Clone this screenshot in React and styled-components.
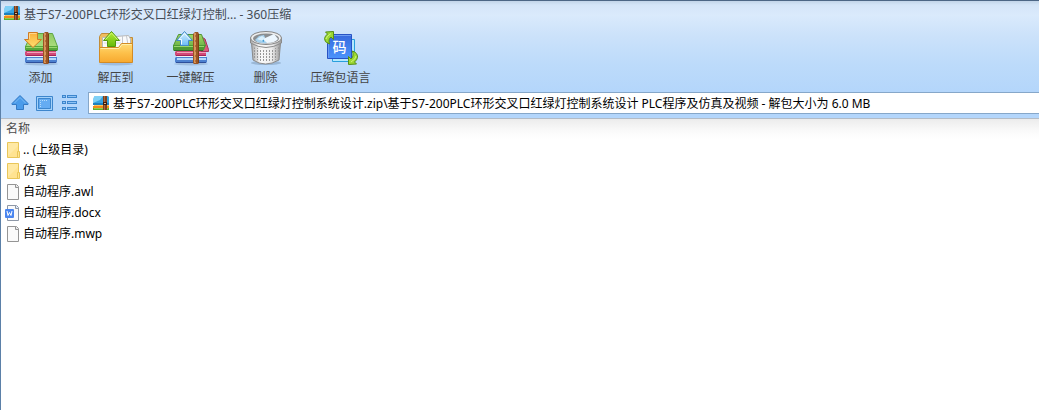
import { useState } from "react";
import styled, { createGlobalStyle } from "styled-components";

const GlobalStyle = createGlobalStyle`
	* {
		box-sizing: border-box;
	}
	body {
		margin: 0;
		background-color: white;
		font-family: "Noto Sans", "Noto Sans CJK SC", sans-serif;
		font-size: 12px;
	}
	button,
	input {
		font: inherit;
	}
`;

const Window = styled.div`
	min-height: 100vh;
	border-top: 1px solid #4c6685;
	border-left: 1px solid #5b80a8;
	background-color: white;
`;

const Header = styled.header`
	padding-bottom: 4px;
	border-bottom: 1px solid #b4bcc6;
	background: linear-gradient(
		#c2d4e8 0px,
		#d4e5f8 4px,
		#daeafc 14px,
		#cce2fa 34px,
		#bddbfa 62px,
		#b4d6fb 90px,
		#b4d6fb 100%
	);
`;

const TitleBar = styled.div`
	display: flex;
	align-items: center;
	gap: 3px;
	height: 25px;
	padding-left: 3px;
`;

const Title = styled.h1`
	margin: 0;
	font-size: 12px;
	font-weight: 400;
	color: #454b54;
`;

const Toolbar = styled.div`
	display: flex;
	height: 66px;
	padding-left: 2px;
`;

const ToolButton = styled.button`
	display: flex;
	flex-direction: column;
	align-items: center;
	gap: 2px;
	width: 75px;
	padding: 3px 0 0;
	border: none;
	background: none;
	color: #444;
	line-height: 18px;
	white-space: nowrap;
	cursor: pointer;
`;

const AddressRow = styled.div`
	display: flex;
	align-items: center;
	height: 22px;
	padding-left: 6px;
`;

const NavButton = styled.button`
	display: flex;
	align-items: center;
	justify-content: center;
	width: 25px;
	height: 22px;
	padding: 0;
	border: none;
	background: none;
	cursor: pointer;
`;

const AddressBox = styled.label`
	display: flex;
	align-items: center;
	flex: 1;
	gap: 3px;
	height: 22px;
	margin-left: 6px;
	padding-left: 4px;
	border: 1px solid #86a7c9;
	border-right: none;
	background-color: white;
`;

const AddressInput = styled.input`
	flex: 1;
	min-width: 0;
	height: 20px;
	padding: 0;
	border: none;
	outline: none;
	background: none;
	color: black;
`;

const FileTable = styled.table`
	width: 100%;
	border-collapse: collapse;
	background: linear-gradient(#ececec 0px, #fafafa 12px, white 20px);
`;

const HeadCell = styled.th`
	height: 20px;
	padding: 0 0 0 5px;
	font-weight: 400;
	line-height: 18px;
	text-align: left;
	color: #4c4c4c;
`;

const FileCell = styled.td`
	height: 21px;
	padding: 0 0 0 4px;
	color: black;
`;

const FileName = styled.div`
	display: flex;
	align-items: center;
	gap: 2px;
	line-height: 18px;
`;

const ZipIcon = () => (
	<svg width="17" height="15" viewBox="0 0 17 15" aria-hidden="true">
		<path d="M1 1L2 0H15L16 1V8L15 9H1L0 8Z" fill="#36a5e4" />
		<path d="M1 1L2 0H10L7 4L0 7V3Z" fill="#7fd0f6" />
		<path d="M0 7H16V9H0Z" fill="#1f7fbc" />
		<path d="M1 9H16V10H1Z" fill="#ffc65a" />
		<path d="M0 10H16V12H0Z" fill="#f08a1c" />
		<path d="M0 12H16V14H0Z" fill="#5fae2a" />
		<path d="M1 12H15V13H1Z" fill="#93d04c" />
		<path d="M10 0H14V14H10Z" fill="#7d411f" />
		<path d="M11.5 0V14" stroke="#a9693d" />
		<path d="M10 6H14V9H10Z" fill="#3f1c0d" />
		<path d="M11 7H13V8H11Z" fill="#e0b080" />
	</svg>
);

const Books = () => (
	<>
		<path d="M4 22H34V27H4L3 26V23Z" fill="#d24a78" />
		<path d="M5 23.5H34" stroke="#f3a0ba" />
		<path d="M4 26.5H34" stroke="#a52456" />
		<path d="M5 27.5H34" stroke="#f0f2f6" />
		<path d="M4 28H35V33L34 34H4L3 33V29Z" fill="#4c80cf" />
		<path d="M5 30H34" stroke="#b4d8fa" strokeWidth="2" />
		<path d="M4 33.5H34" stroke="#2d4f9b" />
	</>
);

const Strap = () => (
	<>
		<path d="M21 5L23 3H26L27 5V34L26 35H22L21 34Z" fill="#9a5524" />
		<path d="M23 4V34" stroke="#d6955a" strokeWidth="2" />
		<path d="M23.5 6V33" stroke="#b4703a" strokeDasharray="2 3" />
		<path d="M26.5 5V34" stroke="#7a3e14" />
	</>
);

const AddIcon = () => (
	<svg width="38" height="38" viewBox="0 0 38 38" aria-hidden="true">
		<defs>
			<linearGradient id="addCover" x1="0" y1="0" x2="0" y2="1">
				<stop offset="0" stopColor="#8fcb62" />
				<stop offset="1" stopColor="#a9dc7c" />
			</linearGradient>
			<linearGradient id="addArrow" x1="0" y1="0" x2="0" y2="1">
				<stop offset="0" stopColor="#fbb03c" />
				<stop offset="1" stopColor="#ffe070" />
			</linearGradient>
		</defs>
		<ellipse cx="19" cy="35" rx="17" ry="1.5" fill="#6687ab" opacity=".35" />
		<Books />
		<path d="M9.5 4.5H30.5L35.5 17.5H3.5Z" fill="url(#addCover)" stroke="#5fa544" />
		<path d="M3 17H36V21L35 22H4L3 21Z" fill="#58a83a" />
		<path d="M4 18.5H35" stroke="#9ad66c" />
		<path d="M4 21.5H35" stroke="#35782a" />
		<Strap />
		<path d="M6.5 3.5H15.5V10.5H19.5L11 18.5L2.5 10.5H6.5Z" fill="url(#addArrow)" stroke="#d07c24" />
		<path d="M7.5 10V4.5H14.5" fill="none" stroke="#ffd68c" />
	</svg>
);

const ExtractToIcon = () => (
	<svg width="38" height="38" viewBox="0 0 38 38" aria-hidden="true">
		<defs>
			<linearGradient id="folderFront" x1="0" y1="0" x2="0" y2="1">
				<stop offset="0" stopColor="#ffdc78" />
				<stop offset=".5" stopColor="#fdc04a" />
				<stop offset="1" stopColor="#f7a92f" />
			</linearGradient>
			<linearGradient id="extractArrow" x1="0" y1="0" x2="0" y2="1">
				<stop offset="0" stopColor="#b6ee35" />
				<stop offset="1" stopColor="#65b90c" />
			</linearGradient>
		</defs>
		<ellipse cx="19" cy="35" rx="17" ry="1.5" fill="#6687ab" opacity=".35" />
		<path d="M2.5 32V7.5L4.5 4.5H12.5L15.5 8.5H35.5V32Z" fill="#efbd5c" stroke="#c08c3a" />
		<path d="M5.5 8.5L31.5 6.5L33.5 10V22H5.5Z" fill="#fafafa" stroke="#b9b9b9" />
		<path d="M25.5 7V16M29.5 7L31 16" stroke="#c3c7cf" />
		<path d="M7 11H24M7 14H24" stroke="#d8dbe0" />
		<path d="M2.5 18.5H21.5L24.5 14.5H35.5V33.5H2.5Z" fill="url(#folderFront)" stroke="#d38b24" />
		<path d="M3.5 19.5H22L25 15.5H34.5" fill="none" stroke="#fff0aa" />
		<path d="M10.5 17.5V11.5H6.5L14.5 2.5L22.5 11.5H18.5V17.5Z" fill="url(#extractArrow)" stroke="#52960f" />
		<path d="M8.5 10.5L14.5 4L20.5 10.5" fill="none" stroke="#d4f779" />
	</svg>
);

const OneClickIcon = () => (
	<svg width="38" height="38" viewBox="0 0 38 38" aria-hidden="true">
		<defs>
			<linearGradient id="oneCover" x1="0" y1="0" x2="0" y2="1">
				<stop offset="0" stopColor="#a3d763" />
				<stop offset="1" stopColor="#71b64a" />
			</linearGradient>
			<linearGradient id="oneArrow" x1="0" y1="0" x2="0" y2="1">
				<stop offset="0" stopColor="#d8f0ff" />
				<stop offset="1" stopColor="#6bbcf7" />
			</linearGradient>
		</defs>
		<ellipse cx="19" cy="35" rx="17" ry="1.5" fill="#6687ab" opacity=".35" />
		<Books />
		<path d="M30.5 8.5L33 10L36.5 20.5V22.5H29Z" fill="#dc5b7c" stroke="#a8305a" />
		<path d="M6.5 5.5H29.5L33.5 16.5H1.5Z" fill="url(#oneCover)" stroke="#4f9437" />
		<path d="M1 16H34L32 21L31 22H2L1 21Z" fill="#4e9a34" />
		<path d="M2 17.5H32" stroke="#9ad66c" />
		<path d="M2 21.5H31" stroke="#2f6c26" />
		<Strap />
		<path d="M8.5 16.5V11.5H4.5L12.5 2.5L20.5 11.5H16.5V16.5Z" fill="url(#oneArrow)" stroke="#4289c9" />
		<path d="M9.5 15.5V10.5H7L12.5 4.5L18 10.5" fill="none" stroke="#f2faff" />
	</svg>
);

const DeleteIcon = () => (
	<svg width="38" height="38" viewBox="0 0 38 38" aria-hidden="true">
		<defs>
			<linearGradient id="binBody">
				<stop offset="0" stopColor="#a8a8a8" />
				<stop offset=".3" stopColor="#fafafa" />
				<stop offset=".7" stopColor="#ededed" />
				<stop offset="1" stopColor="#9a9a9a" />
			</linearGradient>
			<pattern id="binHoles" width="3" height="3" patternUnits="userSpaceOnUse">
				<rect width="1" height="2" x="1" fill="#979797" />
			</pattern>
		</defs>
		<ellipse cx="19" cy="34" rx="15" ry="2" fill="#587592" opacity=".35" />
		<path d="M4.5 14L6 31Q18 39 32 31L33.5 14Z" fill="url(#binBody)" stroke="#8a8a8a" />
		<path d="M6 18Q19 23 32 18L31 30Q19 35 7 30Z" fill="url(#binHoles)" />
		<path d="M3.5 9V14Q19 23 34.5 14V9Z" fill="url(#binBody)" stroke="#8b8b8b" />
		<ellipse cx="19" cy="9" rx="15.5" ry="6.5" fill="#ededed" stroke="#858585" />
		<ellipse cx="19" cy="9.5" rx="13" ry="5" fill="#8b8e91" />
		<path d="M8 11L12 7L17 6L20 14Q12 15 8 11Z" fill="#a6d1ee" />
		<path d="M13 11L17 9L17 13Z" fill="#409bd5" />
		<path d="M16 10L27 5L31 10Q28 14 20 14Z" fill="#edf7ff" />
		<path d="M10 10L15 7L18 9L15 12Z" fill="#d9effc" />
	</svg>
);

const LanguageIcon = () => (
	<svg width="38" height="38" viewBox="0 0 38 38" aria-hidden="true">
		<defs>
			<linearGradient id="langTile" x1="0" y1="0" x2="0" y2="1">
				<stop offset="0" stopColor="#3768dc" />
				<stop offset="1" stopColor="#4b94fc" />
			</linearGradient>
		</defs>
		<path d="M10.5 10.5H32.5V32.5H10.5Z" fill="#b4e8fd" stroke="#299fdc" />
		<path d="M5.5 5.5H29.5V29.5H5.5Z" fill="url(#langTile)" stroke="#2853c4" />
		<path d="M6.5 29V6.5H29" fill="none" stroke="#6c9cf2" />
		<text x="17.5" y="23" textAnchor="middle" fontSize="14" fontWeight="500" fill="white">
			码
		</text>
		<path d="M3.5 3L11.5 2.5V10.5L9 8Q6 10 7.5 15Q2 13 2.5 9.5Q3 7 5.5 5Z" fill="#9cd832" stroke="#568f15" />
		<path d="M4 10Q4.5 7 9 4.5" fill="none" stroke="#d0f37a" />
		<path d="M34.5 35L26.5 35.5V27.5L29 30Q32 28 30.5 22Q36 24 35.5 28.5Q35 31 32.5 33Z" fill="#9cd832" stroke="#568f15" />
		<path d="M34 27Q34 30 29 33" fill="none" stroke="#d0f37a" />
	</svg>
);

const UpIcon = () => (
	<svg width="18" height="16" viewBox="0 0 18 16" aria-hidden="true">
		<path d="M9 .5L17 8.5V9.5H12.5V14.5H5.5V9.5H1V8.5Z" fill="#4a9bea" stroke="#3379c4" />
		<path d="M3.5 8L9 2.5L14.5 8" fill="none" stroke="#7abbf5" />
	</svg>
);

const ViewIcon = () => (
	<svg width="17" height="15" viewBox="0 0 17 15" aria-hidden="true">
		<path d="M.5.5H16.5V14.5H.5Z" fill="#a3d1fa" stroke="#3d86cd" />
		<path d="M2.5 2.5H14.5V12.5H2.5Z" fill="#65acf2" stroke="#3d86cd" />
		<path d="M4.5 11V4.5H12" fill="none" stroke="#b7dcfb" strokeDasharray="1 1" />
	</svg>
);

const ListIcon = () => (
	<svg width="17" height="16" viewBox="0 0 17 16" aria-hidden="true">
		{[0, 6, 12].map((y) => (
			<g key={y} fill="#8dc2f5" stroke="#3d86cd">
				<rect x="1.5" y={y + 0.5} width="3" height="2" />
				<rect x="6.5" y={y + 0.5} width="9" height="2" />
			</g>
		))}
	</svg>
);

const FolderIcon = () => (
	<svg width="16" height="18" viewBox="0 0 16 18" aria-hidden="true">
		<path d="M2.5 1.5H13.5V10.5H14.5V16.5H2.5Z" fill="#ffe391" stroke="#e9c659" />
		<path d="M12.5 16V10.5H14" fill="none" stroke="#e9c659" />
		<path d="M3 2H13V5L3 15Z" fill="#ffe9a4" />
	</svg>
);

const PageIcon = () => (
	<svg width="16" height="18" viewBox="0 0 16 18" aria-hidden="true">
		<path d="M2.5 1.5H11.5L13.5 3.5V16.5H2.5Z" fill="#fafafa" stroke="#959595" />
		<path d="M10.5 1.5V4.5H13.5" fill="#e4e4e4" stroke="#959595" />
	</svg>
);

const DocIcon = () => (
	<svg width="16" height="18" viewBox="0 0 16 18" aria-hidden="true">
		<path d="M2.5 1.5H11.5L13.5 3.5V16.5H2.5Z" fill="#fafafa" stroke="#8d97a6" />
		<path d="M10.5 1.5V4.5H13.5" fill="#d5e3fb" stroke="#8d97a6" />
		<rect x="0" y="5" width="9" height="9" rx="1" fill="#4a86f0" />
		<path d="M2 7L3 11.5L4.5 8.5L6 11.5L7 7" fill="none" stroke="white" />
	</svg>
);

const tools = [
	{ label: "添加", Icon: AddIcon },
	{ label: "解压到", Icon: ExtractToIcon },
	{ label: "一键解压", Icon: OneClickIcon },
	{ label: "删除", Icon: DeleteIcon },
	{ label: "压缩包语言", Icon: LanguageIcon },
];

const navs = [
	{ label: "向上", Icon: UpIcon },
	{ label: "视图", Icon: ViewIcon },
	{ label: "列表", Icon: ListIcon },
];

const files = [
	{ name: ".. (上级目录)", Icon: FolderIcon },
	{ name: "仿真", Icon: FolderIcon },
	{ name: "自动程序.awl", Icon: PageIcon },
	{ name: "自动程序.docx", Icon: DocIcon },
	{ name: "自动程序.mwp", Icon: PageIcon },
];

const App = () => {
	const [path, setPath] = useState(
		"基于S7-200PLC环形交叉口红绿灯控制系统设计.zip\\基于S7-200PLC环形交叉口红绿灯控制系统设计 PLC程序及仿真及视频 - 解包大小为 6.0 MB"
	);

	return (
		<Window>
			<GlobalStyle />
			<Header>
				<TitleBar>
					<ZipIcon />
					<Title>基于S7-200PLC环形交叉口红绿灯控制... - 360压缩</Title>
				</TitleBar>
				<Toolbar>
					{tools.map(({ label, Icon }) => (
						<ToolButton key={label} type="button">
							<Icon />
							{label}
						</ToolButton>
					))}
				</Toolbar>
				<AddressRow>
					{navs.map(({ label, Icon }) => (
						<NavButton key={label} type="button" aria-label={label}>
							<Icon />
						</NavButton>
					))}
					<AddressBox>
						<ZipIcon />
						<AddressInput
							aria-label="路径"
							value={path}
							onChange={(e) => setPath(e.target.value)}
						/>
					</AddressBox>
				</AddressRow>
			</Header>
			<FileTable>
				<thead>
					<tr>
						<HeadCell>名称</HeadCell>
					</tr>
				</thead>
				<tbody>
					{files.map(({ name, Icon }) => (
						<tr key={name}>
							<FileCell>
								<FileName>
									<Icon />
									{name}
								</FileName>
							</FileCell>
						</tr>
					))}
				</tbody>
			</FileTable>
		</Window>
	);
};

export default App;
